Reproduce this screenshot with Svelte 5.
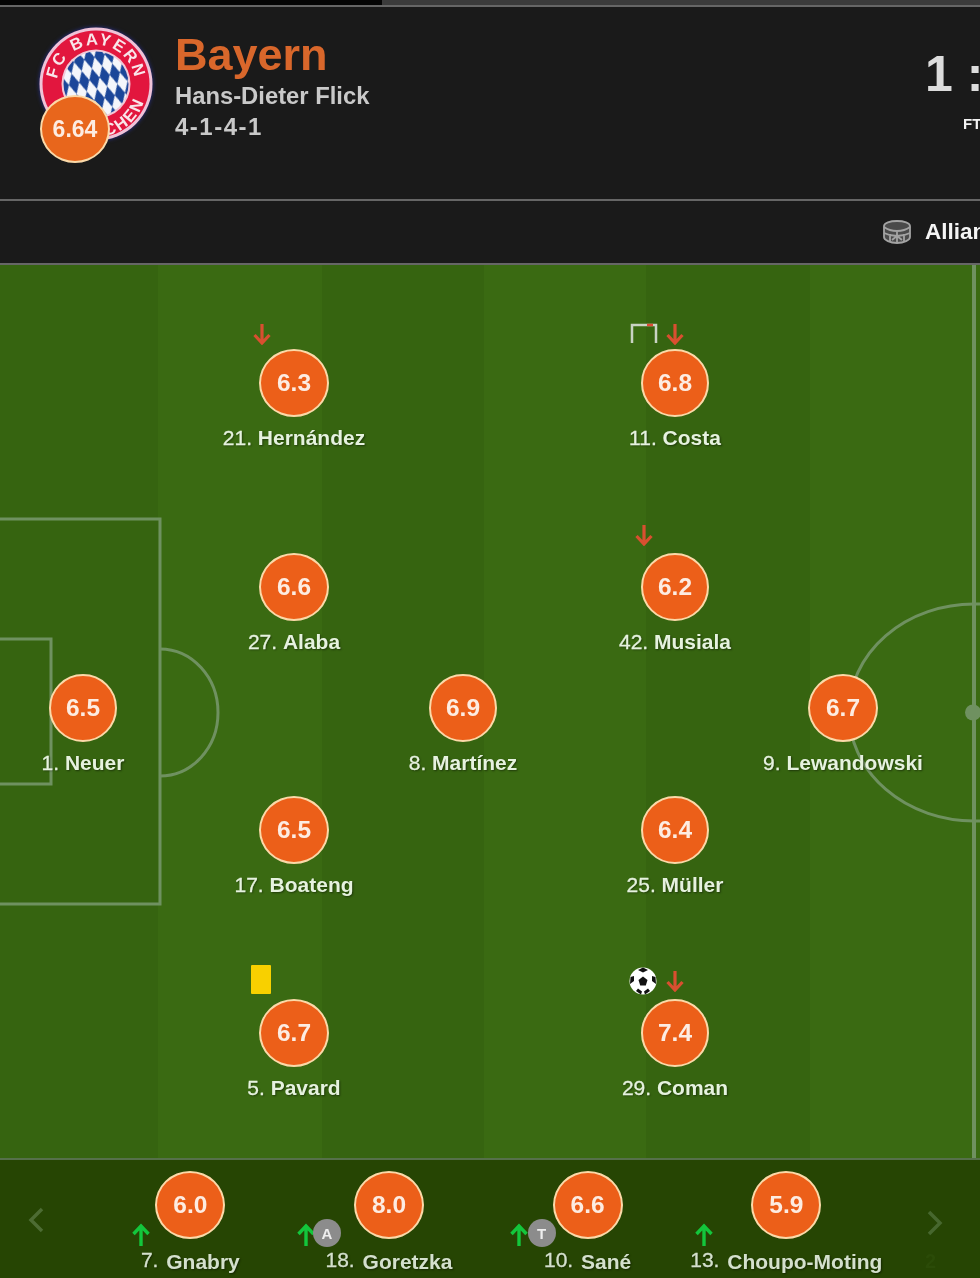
<script>
  const players = [
    { x: 83, y: 443, w: 68, r: '6.5', n: '1.', name: 'Neuer' },
    { x: 294, y: 118, w: 70, r: '6.3', n: '21.', name: 'Hernández', first: true, marks: ['arrow-a'] },
    { x: 294, y: 322, w: 70, r: '6.6', n: '27.', name: 'Alaba' },
    { x: 294, y: 565, w: 70, r: '6.5', n: '17.', name: 'Boateng' },
    { x: 294, y: 768, w: 70, r: '6.7', n: '5.', name: 'Pavard', marks: ['card'] },
    { x: 463, y: 443, w: 68, r: '6.9', n: '8.', name: 'Martínez' },
    { x: 675, y: 118, w: 68, r: '6.8', n: '11.', name: 'Costa', first: true, marks: ['goal', 'arrow-b'] },
    { x: 675, y: 322, w: 68, r: '6.2', n: '42.', name: 'Musiala', marks: ['arrow-c'] },
    { x: 675, y: 565, w: 68, r: '6.4', n: '25.', name: 'Müller' },
    { x: 675, y: 768, w: 68, r: '7.4', n: '29.', name: 'Coman', marks: ['ball', 'arrow-b'] },
    { x: 843, y: 443, w: 70, r: '6.7', n: '9.', name: 'Lewandowski' }
  ];
  const subs = [
    { r: '6.0', n: '7.', name: 'Gnabry', ax: -59 },
    { r: '8.0', n: '18.', name: 'Goretzka', ax: -93, badge: 'A', bx: -76 },
    { r: '6.6', n: '10.', name: 'Sané', ax: -79, badge: 'T', bx: -60 },
    { r: '5.9', n: '13.', name: 'Choupo-Moting', ax: -92 }
  ];
</script>

{#snippet arrow(cls, color)}
  <svg class={cls} viewBox="0 0 20 22" width="20" height="22" fill="none" stroke={color} stroke-width="3.200">
    <path d="M10 1V20M2.500 12L10 20L17.500 12" />
  </svg>
{/snippet}

<div class="page">
  <div class="strip"><div class="strip-dark"></div></div>

  <header class="head">
    <div class="crest-wrap">
      <svg class="crest" viewBox="0 0 116 116" width="116" height="116">
        <defs>
          <pattern id="loz" width="10.500" height="21" patternUnits="userSpaceOnUse" patternTransform="rotate(-14 58 58)">
            <rect width="10.500" height="21" fill="#f4f6fb" />
            <path d="M5.250 0L10.500 10.500L5.250 21L0 10.500Z" fill="#1b4699" />
          </pattern>
          <path id="top-arc" d="M21.400 71.300A39 39 0 1 1 94.600 71.300" />
          <path id="bot-arc" d="M10 74.700A50 50 0 0 0 106 74.700" />
        </defs>
        <circle cx="58" cy="58" r="56.500" fill="#efc3d8" />
        <circle cx="58" cy="58" r="53.500" fill="#e2163e" />
        <text class="crest-text"><textPath href="#top-arc" startOffset="50%" text-anchor="middle">FC BAYERN</textPath></text>
        <text class="crest-text"><textPath href="#bot-arc" startOffset="62%" text-anchor="middle">MÜNCHEN</textPath></text>
        <circle cx="58" cy="58" r="34.500" fill="#f1c9d8" />
        <circle cx="58" cy="58" r="32.500" fill="url(#loz)" />
      </svg>
      <div class="rating team-rating"><span>6.64</span></div>
    </div>
    <div class="team">
      <div class="team-name">Bayern</div>
      <div class="coach">Hans-Dieter Flick</div>
      <div class="formation">4-1-4-1</div>
    </div>
    <div class="score">
      <div class="score-num">1 : 3</div>
      <div class="status">FT</div>
    </div>
  </header>

  <div class="venue">
    <svg viewBox="0 0 30 24" width="30" height="24" fill="#4a4a4a" stroke="#a3a3a3" stroke-width="1.800">
      <path d="M2 6C2 3 8 1 15 1S28 3 28 6V17C28 20 22 23 15 23S2 20 2 17Z" />
      <path d="M2 7C6 10 9 11 15 11S24 10 28 7M2 13C6 15 9 16 15 16S24 15 28 13M8 14V21M15 11V23M22 14V21M10 20L15 16L20 20" fill="none" />
    </svg>
    <span>Allianz Arena</span>
  </div>

  <section class="pitch">
    <svg class="lines" viewBox="0 0 980 894" width="980" height="894" fill="none" stroke="#6f9160" stroke-width="3">
      <rect x="-4" y="254" width="164" height="385" />
      <rect x="-4" y="374" width="55" height="145" />
      <path d="M160 384A58 63.500 0 0 1 160 511" />
      <ellipse cx="974" cy="447.500" rx="125" ry="108.500" />
      <path d="M974 0V894" stroke-width="4" />
      <circle cx="973" cy="447.500" r="8" fill="#6f9160" stroke="none" />
    </svg>

    {#each players as p}
      <div class="player" class:first={p.first} style="left:{p.x}px;top:{p.y - 34}px">
        <div class="rating" style="width:{p.w}px">
          <span>{p.r}</span>
        </div>
        <div class="label"><span class="num">{p.n}</span> <b>{p.name}</b></div>
        {#each p.marks ?? [] as m}
          {#if m === 'arrow-a'}
            {@render arrow('mark arrow-a', '#d94f30')}
          {:else if m === 'arrow-b'}
            {@render arrow('mark arrow-b', '#d94f30')}
          {:else if m === 'arrow-c'}
            {@render arrow('mark arrow-c', '#d94f30')}
          {:else if m === 'card'}
            <div class="mark card"></div>
          {:else if m === 'goal'}
            <svg class="mark goal" viewBox="0 0 28 20" width="28" height="20" fill="none" stroke="#c9d3c4" stroke-width="2.500">
              <path d="M2 20V2H26V20" />
              <path d="M17 2L23 2" stroke="#df4a35" />
            </svg>
          {:else if m === 'ball'}
            <svg class="mark ball" viewBox="0 0 28 28" width="28" height="28">
              <circle cx="14" cy="14" r="13.500" fill="#fff" />
              <path d="M14 9.500L18.500 13L16.800 18.500H11.200L9.500 13Z" fill="#111" />
              <path d="M14 .5L9 3L14 5.500L19 3ZM1.500 10L1 17L5 14L5 9ZM26.500 10L27 17L23 14L23 9ZM7 24L12 27.500L13 24.500L9 21.500ZM21 24L16 27.500L15 24.500L19 21.500Z" fill="#111" />
            </svg>
          {/if}
        {/each}
      </div>
    {/each}
  </section>

  <section class="subs">
    <svg class="chev chev-l" viewBox="0 0 16 26" width="16" height="26" fill="none" stroke="#4d6c33" stroke-width="3.500"><path d="M14 2L3 13L14 24" /></svg>
    {#each subs as s}
      <div class="sub">
        <div class="rating"><span>{s.r}</span></div>
        <div class="label sub-label"><span class="num">{s.n}</span> <b>{s.name}</b></div>
        <svg class="sub-arrow" style="margin-left:{s.ax}px" viewBox="0 0 20 24" width="20" height="24" fill="none" stroke="#13c63c" stroke-width="3.400">
          <path d="M10 23V3M2.500 11L10 3L17.500 11" />
        </svg>
        {#if s.badge}
          <div class="badge" style="margin-left:{s.bx}px">{s.badge}</div>
        {/if}
      </div>
    {/each}
    <svg class="chev chev-r" viewBox="0 0 16 26" width="16" height="26" fill="none" stroke="#47672e" stroke-width="3.500"><path d="M2 2L13 13L2 24" /></svg>
    <div class="ghost">2</div>
  </section>
</div>

<style>
  :global(body) {
    margin: 0;
    background: #1a1a1a;
  }
  .page {
    width: 980px;
    height: 1278px;
    overflow: hidden;
    display: flex;
    flex-direction: column;
    font-family: "Liberation Sans", Arial, sans-serif;
    filter: blur(0.55px);
  }
  .strip {
    height: 5px;
    background: #3b3b3b;
    border-bottom: 2px solid #666;
  }
  .strip-dark {
    width: 382px;
    height: 5px;
    background: #050505;
  }
  .head {
    height: 192px;
    flex: none;
    background: #1a1a1a;
    border-bottom: 2px solid #666;
    display: flex;
    align-items: flex-start;
    position: relative;
  }
  .crest-wrap {
    position: relative;
    width: 116px;
    height: 116px;
    margin: 19px 0 0 38px;
  }
  .crest {
    display: block;
    filter: drop-shadow(0 0 2px #27308c);
  }
  .crest-text {
    font: bold 16.500px "Liberation Sans", Arial, sans-serif;
    fill: #f9e6ea;
    letter-spacing: 2px;
  }
  .rating {
    width: 70px;
    height: 68px;
    box-sizing: border-box;
    border: 2px solid #fbd9a8;
    border-radius: 50%;
    background: #ec5f19;
    color: #fdece2;
    font-size: 24.500px;
    font-weight: 700;
    display: flex;
    align-items: center;
    justify-content: center;
    flex: none;
  }
  .team-rating {
    position: absolute;
    left: 2px;
    top: 69px;
    background: #e8661c;
    font-size: 23px;
  }
  .team {
    margin: 25px 0 0 21px;
  }
  .team-name {
    color: #d9672b;
    font-size: 45px;
    font-weight: 700;
    line-height: 46px;
  }
  .coach {
    color: #c9c9c9;
    font-size: 23.800px;
    font-weight: 700;
    line-height: 28px;
    margin-top: 4px;
  }
  .formation {
    color: #c9c9c9;
    font-size: 24px;
    font-weight: 700;
    letter-spacing: 1.500px;
    line-height: 28px;
    margin-top: 3px;
  }
  .score {
    margin-left: auto;
    width: 55px;
    white-space: nowrap;
    overflow: hidden;
    position: relative;
    height: 130px;
    margin-top: 37px;
  }
  .score-num {
    color: #dcdcdc;
    font-size: 50px;
    font-weight: 700;
    line-height: 60px;
  }
  .status {
    color: #f2f2f2;
    font-size: 15px;
    font-weight: 700;
    margin: 11px 0 0 38px;
  }
  .venue {
    height: 62px;
    flex: none;
    background: #1a1a1a;
    border-bottom: 2px solid #666;
    display: flex;
    align-items: center;
    padding-left: 882px;
    gap: 13px;
    white-space: nowrap;
  }
  .venue svg {
    flex: none;
  }
  .venue span {
    color: #f4f4f4;
    font-size: 22.500px;
    font-weight: 700;
  }
  .pitch {
    position: relative;
    height: 894px;
    flex: none;
    background: linear-gradient(90deg, #366410 0 158px, #3a6a12 158px 322px, #366410 322px 484px, #3a6a12 484px 646px, #366410 646px 810px, #3a6a12 810px);
    overflow: hidden;
  }
  .lines {
    position: absolute;
    inset: 0;
  }
  .player {
    position: absolute;
    width: 0;
    display: flex;
    flex-direction: column;
    align-items: center;
  }
  .label {
    color: #e6f2df;
    font-size: 21px;
    white-space: nowrap;
    text-shadow: 1px 1px 2px rgba(0, 0, 0, 0.45);
    margin-top: 8px;
    line-height: 25px;
  }
  .num {
    font-weight: 400;
    -webkit-text-stroke: 0.3px currentColor;
  }
  .label b {
    font-weight: 700;
  }
  .player :global(.mark) {
    position: absolute;
  }
  .player :global(.arrow-a) {
    left: -42px;
    top: -29px;
  }
  .player :global(.arrow-b) {
    left: -10px;
    top: -29px;
  }
  .player :global(.arrow-c) {
    left: -41px;
    top: -29px;
  }
  .player.first :global(.arrow-a),
  .player.first :global(.arrow-b) {
    top: -26px;
  }
  .card {
    width: 20px;
    height: 29px;
    left: -43px;
    top: -34px;
    background: #f8d000;
    border-radius: 1px;
  }
  .goal {
    left: -45px;
    top: -26px;
  }
  .ball {
    left: -46px;
    top: -32px;
  }
  .subs {
    flex: 1;
    display: grid;
    grid-template-columns: repeat(4, 198.660px);
    padding-left: 91px;
    background: #264503;
    border-top: 2px solid #56704a;
    margin-top: -1px;
    position: relative;
  }
  .sub {
    position: relative;
    display: flex;
    flex-direction: column;
    align-items: center;
    padding-top: 11px;
  }
  .sub-label {
    margin-top: 10px;
    color: #d4e0cd;
  }
  .sub-label .num {
    position: relative;
    top: -2px;
    margin-right: 2px;
  }
  .sub-arrow {
    position: absolute;
    left: 50%;
    top: 63px;
  }
  .badge {
    position: absolute;
    left: 50%;
    top: 59px;
    width: 28px;
    height: 28px;
    box-sizing: border-box;
    border-radius: 50%;
    background: #8c8c8c;
    color: #eee;
    font-size: 15px;
    font-weight: 700;
    display: flex;
    align-items: center;
    justify-content: center;
  }
  .chev {
    position: absolute;
    top: 47px;
  }
  .chev-l {
    left: 28px;
  }
  .chev-r {
    left: 927px;
    top: 50px;
  }
  .ghost {
    position: absolute;
    left: 925px;
    top: 90px;
    font-size: 20px;
    font-weight: 700;
    color: #2b4b08;
  }
</style>
